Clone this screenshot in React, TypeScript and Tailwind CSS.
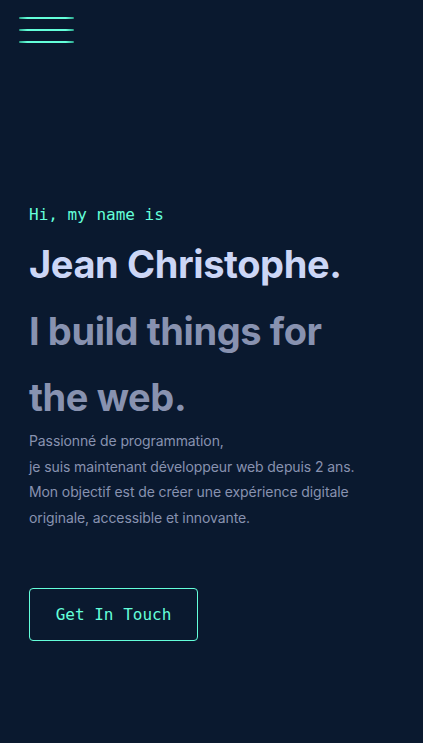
import React from "react";

export default function App() {
  const mono = { fontFamily: '"DejaVu Sans Mono", "Liberation Mono", monospace' };
  const sans = { fontFamily: 'Inter, "Noto Sans", sans-serif' };
  return (
    <div className="min-h-[743px] w-full bg-[#0a192f]" style={sans}>
      <header className="px-[19px] pt-[17px]">
        <button className="flex flex-col gap-[10px] w-[55px]">
          <span className="block h-[2px] w-full rounded-full bg-[linear-gradient(90deg,#2aa38a,#64ffda_15%,#64ffda_85%,#2aa38a)]" />
          <span className="block h-[2px] w-full rounded-full bg-[linear-gradient(90deg,#2aa38a,#64ffda_15%,#64ffda_85%,#2aa38a)]" />
          <span className="block h-[2px] w-full rounded-full bg-[linear-gradient(90deg,#2aa38a,#64ffda_15%,#64ffda_85%,#2aa38a)]" />
        </button>
      </header>
      <main className="px-[29px] pt-[160px]">
        <p className="text-[#64ffda] text-[16px] leading-[24px]" style={mono}>Hi, my name is</p>
        <h1 className="mt-[13px] text-[#ccd6f6] text-[38px] leading-[48px] font-bold tracking-[-0.4px]">Jean Christophe.</h1>
        <h2 className="mt-[10px] text-[#8892b0] text-[38px] leading-[66px] font-bold tracking-[-0.4px]">
          I build things for<br />the web.
        </h2>
        <p className="-mt-[2px] text-[#8892b0] text-[14px] leading-[25.5px] tracking-[-0.1px]">
          Passionné de programmation,<br />
          je suis maintenant développeur web depuis 2 ans.<br />
          Mon objectif est de créer une expérience digitale originale, accessible et innovante.
        </p>
        <button
          className="mt-[58px] w-[169px] h-[53px] border border-[#64ffda] rounded-[4px] text-[#64ffda] text-[16px]"
          style={mono}
        >
          Get In Touch
        </button>
      </main>
    </div>
  );
}
